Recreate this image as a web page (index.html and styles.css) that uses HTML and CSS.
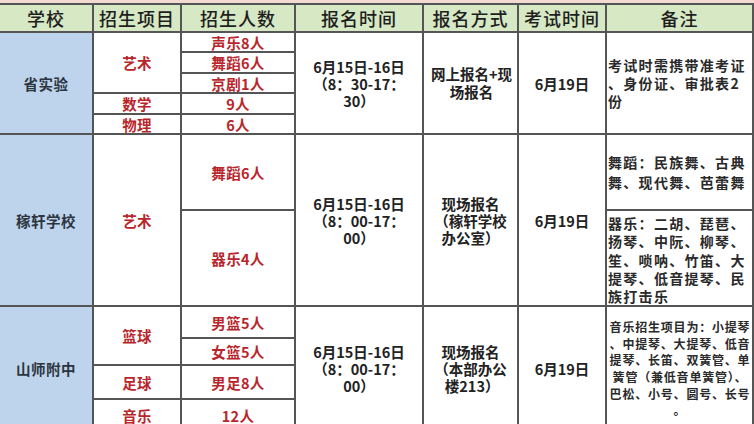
FILE: index.html
```html
<!DOCTYPE html>
<html lang="zh-CN">
<head>
<meta charset="utf-8">
<title>招生信息表</title>
<link rel="stylesheet" href="styles.css">
</head>
<body>
<table class="grid">
  <colgroup>
    <col class="c1"><col class="c2"><col class="c3"><col class="c4"><col class="c5"><col class="c6"><col class="c7">
  </colgroup>
  <thead>
    <tr class="head">
      <th>学校</th><th>招生项目</th><th>招生人数</th><th>报名时间</th><th>报名方式</th><th>考试时间</th><th>备注</th>
    </tr>
  </thead>
  <tbody>
    <tr class="r20">
      <td class="school" rowspan="5">省实验</td>
      <td class="red" rowspan="3">艺术</td>
      <td class="red">声乐8人</td>
      <td class="time" rowspan="5">6月15日-16日<br>（8：30-17：<br>30）</td>
      <td class="way center" rowspan="5">网上报名+现<br>场报名</td>
      <td class="exam" rowspan="5">6月19日</td>
      <td class="note n1" rowspan="5">考试时需携带准考证<br>、身份证、审批表2<br>份</td>
    </tr>
    <tr class="r21"><td class="red">舞蹈6人</td></tr>
    <tr class="r20"><td class="red">京剧1人</td></tr>
    <tr class="r21"><td class="red">数学</td><td class="red">9人</td></tr>
    <tr class="r20"><td class="red">物理</td><td class="red">6人</td></tr>

    <tr class="r76">
      <td class="school" rowspan="2">稼轩学校</td>
      <td class="red" rowspan="2">艺术</td>
      <td class="red">舞蹈6人</td>
      <td class="time" rowspan="2">6月15日-16日<br>（8：00-17：<br>00）</td>
      <td class="way" rowspan="2">现场报名<br>（稼轩学校<br>办公室）</td>
      <td class="exam" rowspan="2">6月19日</td>
      <td class="note n2">舞蹈：民族舞、古典<br>舞、现代舞、芭蕾舞</td>
    </tr>
    <tr class="r96">
      <td class="red">器乐4人</td>
      <td class="note n3">器乐：二胡、琵琶、<br>扬琴、中阮、柳琴、<br>笙、唢呐、竹笛、大<br>提琴、低音提琴、民<br>族打击乐</td>
    </tr>

    <tr class="r32">
      <td class="school" rowspan="4">山师附中</td>
      <td class="red" rowspan="2">篮球</td>
      <td class="red">男篮5人</td>
      <td class="time" rowspan="4">6月15日-16日<br>（8：00-17：<br>00）</td>
      <td class="way" rowspan="4">现场报名<br>（本部办公<br>&nbsp;楼213）</td>
      <td class="exam" rowspan="4">6月19日</td>
      <td class="note n4" rowspan="4">音乐招生项目为：小提琴<br>、中提琴、大提琴、低音<br>提琴、长笛、双簧管、单<br>簧管（兼低音单簧管）、<br>巴松、小号、圆号、长号<br>。</td>
    </tr>
    <tr class="r27"><td class="red">女篮5人</td></tr>
    <tr class="r34"><td class="red">足球</td><td class="red">男足8人</td></tr>
    <tr class="r32"><td class="red">音乐</td><td class="red">12人</td></tr>
  </tbody>
</table>
</body>
</html>
```

FILE: styles.css
```css
html {
  background: #f3dbd1;
}
body {
  margin: 0;
  height: 424px;
  overflow: hidden;
  font-family: "Noto Sans CJK SC", "Noto Sans", sans-serif;
  color: #222;
}
.grid {
  margin-top: 3px;
  width: 753px;
  table-layout: fixed;
  border-collapse: collapse;
  background: #fff;
}
.c1 { width: 93px; }
.c2 { width: 88px; }
.c3 { width: 114px; }
.c4 { width: 128px; }
.c5 { width: 95px; }
.c6 { width: 88px; }
.c7 { width: 147px; }

.grid th,
.grid td {
  border: 2px solid #555;
  padding: 0;
  text-align: center;
  vertical-align: middle;
  white-space: nowrap;
  overflow: hidden;
}
.grid tr > :first-child {
  border-left: none;
}
.head {
  height: 28px;
}
.head th {
  background: #d6e8c4;
  font-size: 18px;
  font-weight: 500;
  letter-spacing: 1px;
  line-height: 22px;
  color: #1e1e1e;
}
.r20 { height: 20px; }
.r21 { height: 21px; }
.r27 { height: 27px; }
.r32 { height: 32px; }
.r34 { height: 34px; }
.r76 { height: 76px; }
.r96 { height: 96px; }

.grid td {
  font-size: 14.5px;
  font-weight: 700;
  line-height: 17px;
}
.school {
  background: #bed4ec;
  color: #2c3440;
  letter-spacing: 0.5px;
  border-right-color: #777;
}
.red {
  color: #b8262c;
  letter-spacing: 0.3px;
}
.time {
  line-height: 17.5px;
  color: #222;
}
.way {
  text-align: left;
  padding-left: 13px;
  line-height: 19px;
}
.grid .way.center {
  text-align: center;
  padding-left: 2px;
  line-height: 18px;
}
.exam {
  color: #222;
}
.grid .note {
  text-align: left;
  padding-left: 1px;
  font-size: 14px;
  letter-spacing: 1.3px;
  color: #2a2a2a;
}
.grid .n1 { line-height: 18px; }
.grid .n2 { line-height: 20px; }
.grid .n3 { line-height: 18.3px; vertical-align: top; padding-top: 3px; }
.grid .n4 {
  font-size: 12px;
  letter-spacing: 0.8px;
  line-height: 16.6px;
  text-align: center;
}
```
